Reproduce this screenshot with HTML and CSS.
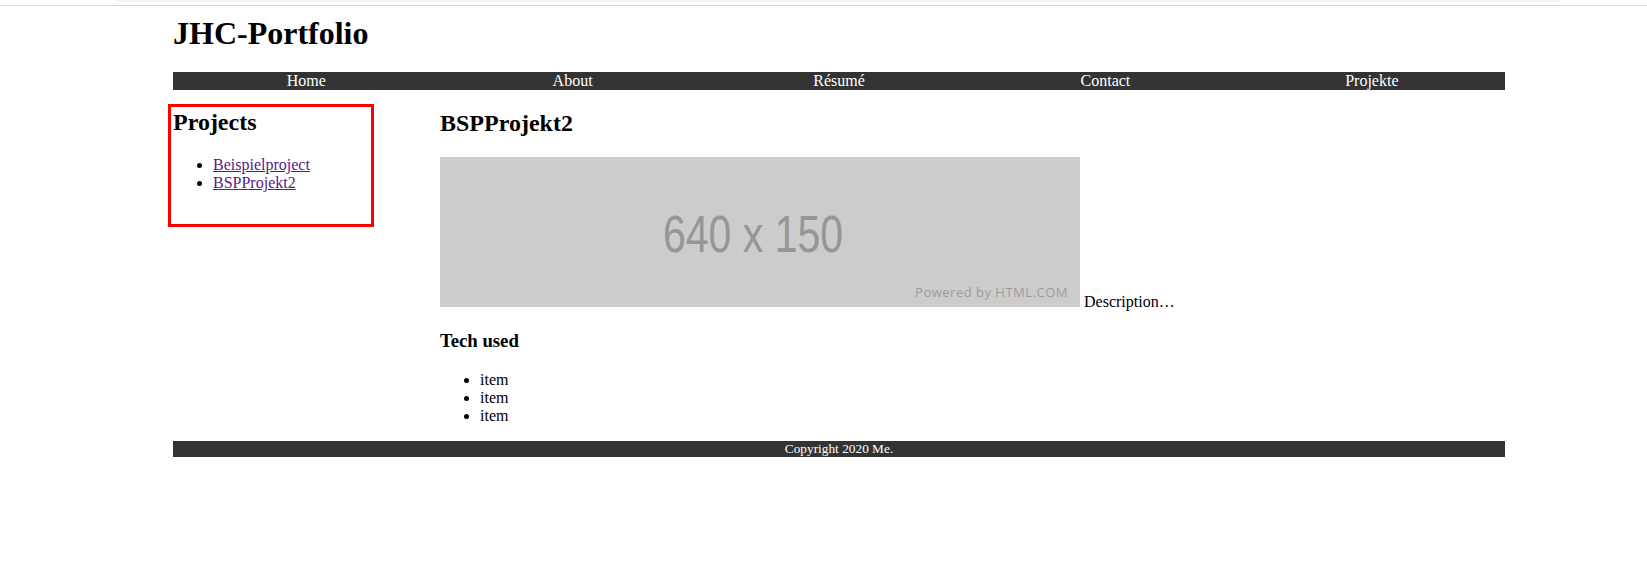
FILE: index.html
```html
<!DOCTYPE html>
<html lang="de">
<head>
<meta charset="utf-8">
<title>JHC-Portfolio</title>
<link rel="stylesheet" href="styles.css">
</head>
<body>
<div class="topbar"><div class="topbar-strip"></div></div>
<div class="page">
  <header>
    <h1 class="site-title">JHC-Portfolio</h1>
    <nav class="nav">
      <a class="nav-item" href="#">Home</a>
      <a class="nav-item" href="#">About</a>
      <a class="nav-item" href="#">Résumé</a>
      <a class="nav-item" href="#">Contact</a>
      <a class="nav-item" href="#">Projekte</a>
    </nav>
  </header>
  <div class="content">
    <div class="side-col">
      <aside class="projects">
        <h2 class="projects-title">Projects</h2>
        <ul class="projects-list">
          <li><a href="#">Beispielproject</a></li>
          <li><a href="#">BSPProjekt2</a></li>
        </ul>
      </aside>
    </div>
    <main class="main">
      <h2 class="project-title">BSPProjekt2</h2>
      <p class="project-desc"><svg class="placeholder" width="640" height="150" viewBox="0 0 640 150" xmlns="http://www.w3.org/2000/svg"><rect width="640" height="150" fill="#cccccc"/><text transform="translate(313,95) scale(1,1.28)" text-anchor="middle" font-family="Liberation Sans, Arial, sans-serif" font-size="41" fill="#969696">640 x 150</text><text x="628" y="140" text-anchor="end" font-family="Open Sans, Noto Sans, sans-serif" font-size="13" letter-spacing="0.5" fill="#9c9c9c">Powered by HTML.COM</text></svg> Description…</p>
      <h3 class="tech-title">Tech used</h3>
      <ul class="tech-list">
        <li>item</li>
        <li>item</li>
        <li>item</li>
      </ul>
    </main>
  </div>
  <footer class="footer">Copyright 2020 Me.</footer>
</div>
</body>
</html>
```

FILE: styles.css
```css
html, body {
  margin: 0;
  padding: 0;
  background: #ffffff;
}

body {
  font-family: "Liberation Serif", "Times New Roman", serif;
  font-size: 16px;
  color: #000;
}

.topbar {
  height: 5px;
  border-bottom: 1px solid #dcdcdc;
}

.topbar-strip {
  margin-left: 117px;
  width: 1444px;
  height: 2px;
  background: #f3f3f3;
}

.page {
  margin-left: 173px;
  width: 1332px;
}

.site-title {
  font-size: 32px;
  font-weight: bold;
  margin: 9px 0 20px;
}

.nav {
  display: flex;
  background: #333333;
  height: 18px;
}

.nav-item {
  flex: 1;
  text-align: center;
  color: #ffffff;
  text-decoration: none;
  line-height: 18px;
  font-size: 16px;
}

.content {
  display: flex;
}

.side-col {
  width: 267px;
  flex: none;
}

.projects {
  width: 196px;
  height: 113px;
  margin-top: 19px;
  outline: 3px solid #ff0000;
  outline-offset: 2px;
}

.projects-title {
  font-size: 24px;
  margin: 3px 0 20px;
}

.projects-list {
  margin: 16px 0;
  padding-left: 40px;
}

.projects-list a {
  color: #551a8b;
}

.main {
  flex: 1;
}

.project-title {
  font-size: 24px;
  margin: 20px 0;
}

.project-desc {
  margin: 16px 0;
}

.placeholder {
  vertical-align: baseline;
}

.tech-title {
  font-size: 18.72px;
  margin: 18.72px 0 19.72px;
}

.tech-list {
  margin: 16px 0;
  padding-left: 40px;
}

.footer {
  background: #333333;
  color: #ffffff;
  text-align: center;
  font-size: 13.33px;
  line-height: 16px;
}
```
